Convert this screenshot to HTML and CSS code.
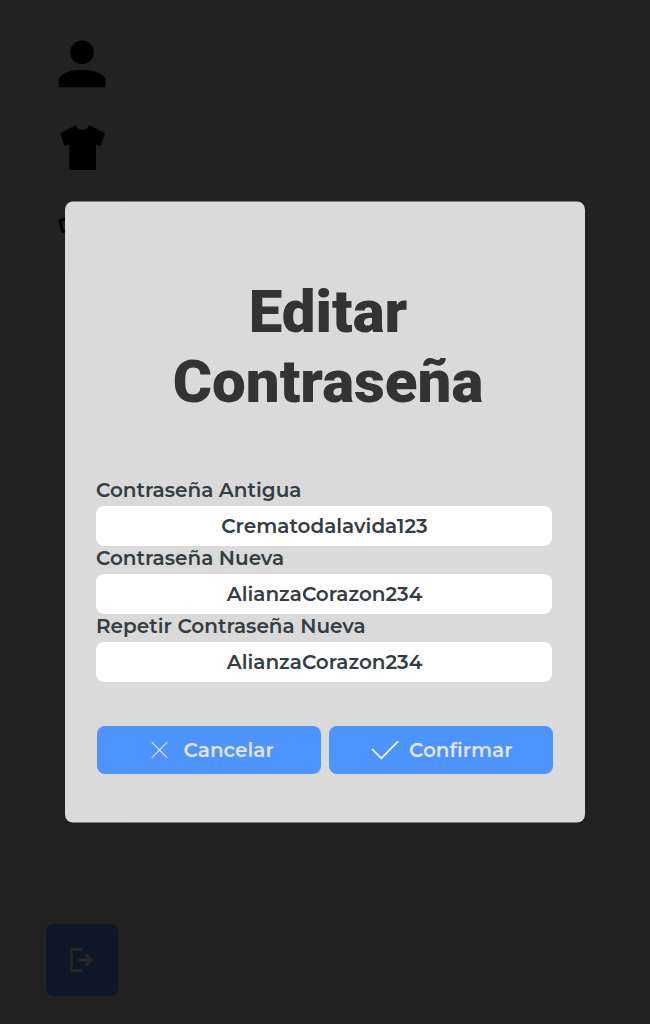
FILE: index.html
```html
<!DOCTYPE html>
<html lang="es">
<head>
<meta charset="utf-8">
<title>Editar Contraseña</title>
<link rel="stylesheet" href="styles.css">
</head>
<body>
<nav class="sidebar">
  <div class="menu">
    <a class="tile"><svg width="72" height="72" viewBox="0 0 72 72"><circle cx="36" cy="24.3" r="11.8"/><path d="M12.5 59.3V53c0-7 10.500-11.300 23.500-11.300S59.500 46 59.500 53v6.300Z"/></svg></a>
    <a class="tile"><svg width="72" height="72" viewBox="0 0 72 72"><path d="M30 12.900C32.500 19.500 40.500 19.500 43 12.900L59 21.200 54.500 34.200 50 32.200V58H23.300V32.200L18.700 34.200 14.200 21.200Z"/></svg></a>
    <a class="tile"><svg width="72" height="72" viewBox="0 0 72 72"><path d="M27 19.800 13.800 24.800 16.800 35.300H27" fill="none" stroke="#000" stroke-width="2.800"/></svg></a>
  </div>
  <a class="tile exit"><svg width="72" height="72" viewBox="0 0 72 72" fill="none" stroke="#262626" stroke-width="2.800"><path d="M36 25.500H27Q25.500 25.500 25.500 27V45Q25.500 46.500 27 46.500H36M32 36H46M40 30.300 46 36 40 41.700"/></svg></a>
</nav>
<main class="modal">
  <div class="content">
    <h1 class="title">Editar<br>Contraseña</h1>
    <div class="fields">
      <div class="field"><div class="label">Contraseña Antigua</div><div class="input">Crematodalavida123</div></div>
      <div class="field"><div class="label">Contraseña Nueva</div><div class="input">AlianzaCorazon234</div></div>
      <div class="field"><div class="label">Repetir Contraseña Nueva</div><div class="input">AlianzaCorazon234</div></div>
    </div>
    <div class="actions">
      <div class="button cancel"><svg width="18" height="18" viewBox="0 0 18 18"><path d="M.700 1.200 16.300 16.800M16.300 1.200 .700 16.800"/></svg><span>Cancelar</span></div>
      <div class="button confirm"><svg width="28" height="20" viewBox="0 0 28 20"><path d="M1 9 10.300 18.300 27 1.400"/></svg><span>Confirmar</span></div>
    </div>
  </div>
</main>
</body>
</html>
```
FILE: styles.css
```css
* { box-sizing: border-box; }
body { margin: 0; height: 1024px; overflow: hidden; background: #222; font-family: "Montserrat", "Inter", sans-serif; }
.sidebar { width: 96px; height: 992px; margin: 16px 0 0 34px; padding: 12px; display: flex; flex-direction: column; justify-content: space-between; background: #212121; border-radius: 8px; }
.menu { display: flex; flex-direction: column; gap: 12px; }
.tile { display: block; width: 72px; height: 72px; border-radius: 8px; background: #222; }
.tile svg { display: block; }
.exit { background: #0e1728; }
.modal { position: fixed; top: 50%; left: 50%; transform: translate(-50%, -50%); width: 520px; height: 621px; padding: 76px 31px 0; background: #dadada; border-radius: 8px; }
.content { transform: translateY(-0.5px); }
.title { margin: 0 0 61px 6px; text-align: center; font: 900 60px/70px Roboto, sans-serif; color: #333; }
.fields { width: 456px; color: #343d41; font-size: 20px; font-weight: 600; }
.label { height: 24px; line-height: 24px; margin-bottom: 4px; white-space: nowrap; }
.input { height: 40px; padding-left: 1px; line-height: 40px; border-radius: 8px; background: #fff; text-align: center; }
.actions { display: flex; gap: 8px; margin: 44px 0 0 1px; }
.button { width: 224px; height: 48px; display: flex; align-items: center; background: #4d94ff; border-radius: 8px; color: #e4e4e4; font-size: 20px; font-weight: 600; }
.button svg { flex: none; fill: none; stroke: #e4e4e4; stroke-width: 1.200; }
.cancel { padding-left: 54px; gap: 14.500px; }
.confirm { padding-left: 42px; gap: 10px; }
.confirm svg { stroke: #fff; stroke-width: 1.700; }
```
